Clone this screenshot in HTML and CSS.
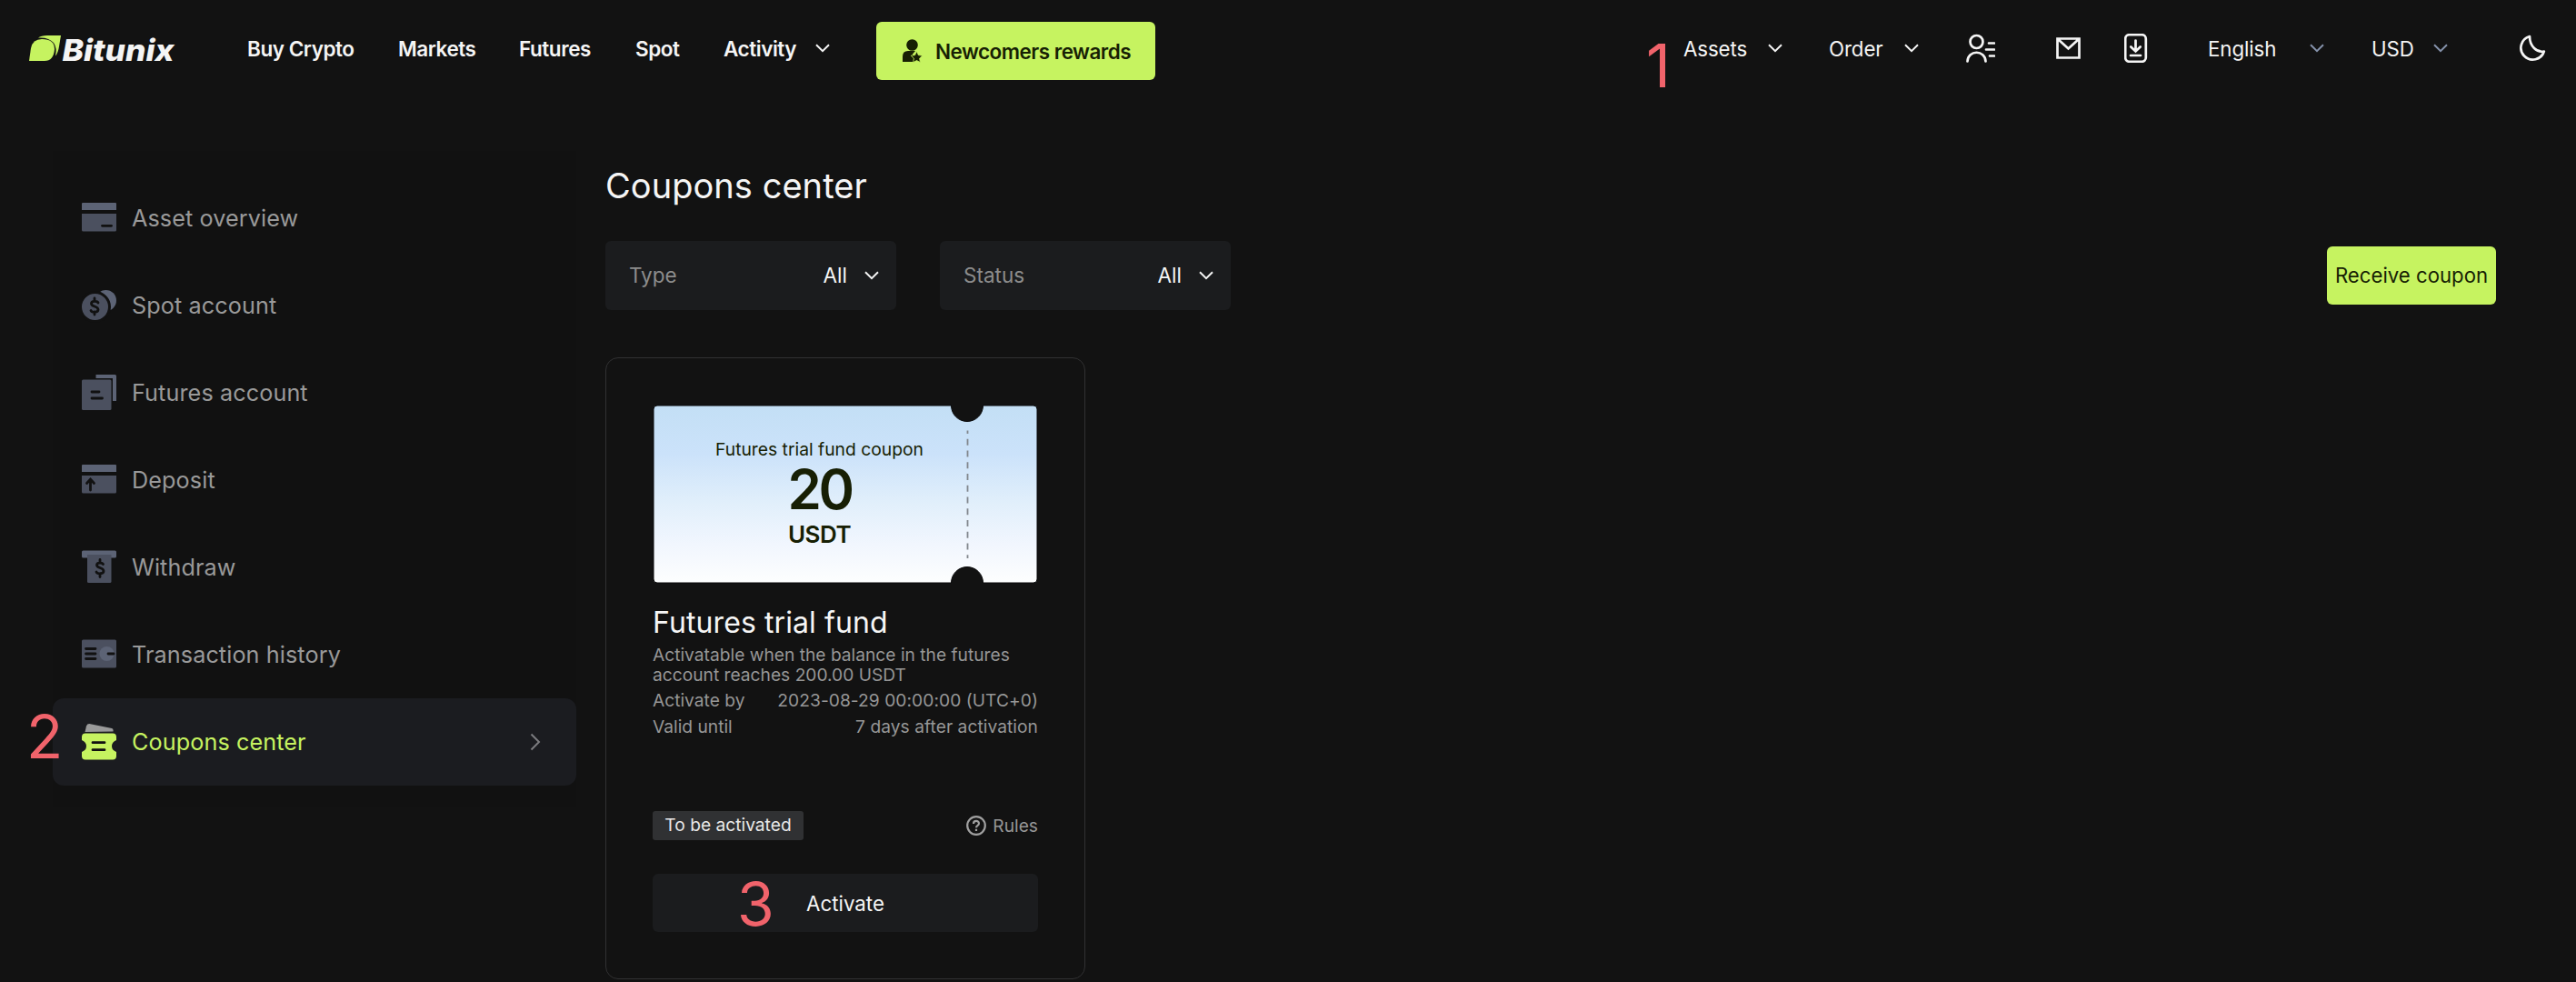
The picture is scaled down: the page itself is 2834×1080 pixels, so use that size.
FILE: index.html
```html
<!DOCTYPE html>
<html lang="en">
<head>
<meta charset="utf-8">
<title>Coupons center - Bitunix</title>
<link rel="stylesheet" href="styles.css">
</head>
<body>
<svg width="0" height="0" class="defs">
  <symbol id="chev" viewBox="0 0 16 10"><path d="M1 1.3 8 8.2 15 1.3" fill="none" stroke="currentColor" stroke-width="2"/></symbol>
</svg>
<header class="header">
  <a class="logo">
    <svg width="180" height="48" viewBox="0 -10 180 48">
      <path class="lime" d="M0 28 2 14Q4 4 14 4Q28 4 28 15Q27 28 17 28Z"/>
      <path class="lime" d="M10 2.6Q13 0 20 0H35L33 12Q32 19 29 22.5Q31 14 27 8Q21 1.500 10 2.600Z"/>
      <text class="wordmark" x="36.500" y="28" textLength="123" lengthAdjust="spacingAndGlyphs">Bitunix</text>
    </svg>
  </a>
  <nav class="nav-left">
    <a>Buy Crypto</a><a>Markets</a><a>Futures</a><a>Spot</a><a>Activity</a>
    <svg class="chev"><use href="#chev"/></svg>
    <a class="rewards">
      <svg width="22" height="26" viewBox="0 0 22 26"><circle cx="10.500" cy="6.500" r="6.300" fill="currentColor"/><path fill="currentColor" d="M0 25V19Q0 13 6 13H14L11 16.500V20L12 21V25Z"/><path fill="currentColor" stroke="#c6f360" stroke-width=".8" d="m15.500 13.600 1.900 4 4.400.6-3.200 3 .8 4.400-3.900-2.100-3.900 2.100.8-4.400-3.200-3 4.400-.6Z"/></svg>
      <span>Newcomers rewards</span>
    </a>
  </nav>
  <nav class="nav-right">
    <a>Assets</a><svg class="chev"><use href="#chev"/></svg>
    <a>Order</a><svg class="chev"><use href="#chev"/></svg>
    <svg width="32" height="32" viewBox="0 0 32 32" class="line"><circle cx="11.500" cy="9" r="7"/><path d="M1.500 30.500C2 17.500 21 17.500 21.500 30.500M25 10.500H31M22 17.500H31M26 24.500H31"/></svg>
    <svg width="28" height="24" viewBox="0 0 28 24" class="line"><path d="M1.500 1.500H25.500V22.500H1.500ZM2 2 13.500 12.500 25 2"/></svg>
    <svg width="26" height="32" viewBox="0 0 26 32" class="line"><rect x="1.200" y="1.200" width="22.600" height="29.600" rx="4.500"/><path d="M12.500 7.500V19M7.300 14.500 12.500 19.500 17.700 14.500M7 24H18"/></svg>
    <a>English</a><svg class="chev muted"><use href="#chev"/></svg>
    <a>USD</a><svg class="chev muted"><use href="#chev"/></svg>
    <svg width="30" height="30" viewBox="0 0 30 30" class="line"><path stroke-linejoin="round" d="M11 2A13 13 0 1 0 26.800 18.500C19 20 11 13 11 2Z"/></svg>
  </nav>
  <span class="mark mark-1">1</span>
</header>

<div class="page">
  <aside class="sidebar">
    <a class="item"><svg class="ico" viewBox="0 0 38 40"><path class="a" d="M0 4Q0 3 1 3H37Q38 3 38 4V11H0Z"/><path class="b" d="M0 15H38V33Q38 34.500 36.500 34.500H1.500Q0 34.500 0 33Z"/><path class="cut" d="M22.500 28.300H32.500"/></svg><span>Asset overview</span></a>
    <a class="item"><svg class="ico" viewBox="0 0 38 40"><circle class="a" cx="26.500" cy="14.500" r="11.500"/><circle class="b edge" cx="14.500" cy="21.500" r="16"/><path class="cut" d="M18 17C17 15 10.500 14.500 10.500 18C10.500 21.500 18 20.500 18 24.500C18 28 11 28 10 25.500M14 12V15M14 27V30"/></svg><span>Spot account</span></a>
    <a class="item"><svg class="ico" viewBox="0 0 38 40"><path class="a" d="M15.500 0H36.500Q38 0 38 1.500V29H34V4H15.500Z"/><rect class="b" y="5.500" width="32.500" height="33.500" rx="1.500"/><path class="cut" d="M11 19H19M11 26H22.500"/></svg><span>Futures account</span></a>
    <a class="item"><svg class="ico" viewBox="0 0 38 40"><path class="a" d="M0 4Q0 3 1 3H37Q38 3 38 4V11H0Z"/><path class="b" d="M0 15H38V33Q38 34.500 36.500 34.500H1.500Q0 34.500 0 33Z"/><path class="cut" d="M9.500 31V19.500M5.500 23.500 9.500 19 13.500 23.500"/></svg><span>Deposit</span></a>
    <a class="item"><svg class="ico" viewBox="0 0 38 40"><rect class="a" y="1.500" width="38" height="8" rx="1.500"/><path class="b" d="M6 6H32.500V35.500Q32.500 37 31 37H7.500Q6 37 6 35.500Z"/><path class="cut" d="M23.500 16.500C22.500 14.500 16.500 14.500 16.500 17.500C16.500 21 24 20 24 24C24 27.500 17 27.500 16 25M20 11.500V14.500M20 27V30.500"/></svg><span>Withdraw</span></a>
    <a class="item"><svg class="ico" viewBox="0 0 38 40"><rect class="b" y="3.500" width="38" height="31" rx="1.500"/><circle class="a" cx="27.500" cy="19" r="8"/><path class="cut" d="M4.500 13.500H15M4.500 19H15M4.500 24.500H15M29 19H35"/></svg><span>Transaction history</span></a>
    <a class="item active"><svg class="ico" viewBox="0 0 38 40"><path fill="#9a9a9a" d="M3.500 9 5 2.500Q6-.5 9.500.2L33 5Q35 5.500 34.500 8.500Z"/><path class="lime" d="M4 10.500H34Q38 10.500 38 14.500V18Q33 20 33 24.500T38 31V35.500Q38 39.500 34 39.500H4Q0 39.500 0 35.500V31Q5 29 5 24.500T0 18V14.500Q0 10.500 4 10.500Z"/><path class="cut" d="M12 20.700H25M12 28.700H25"/></svg><span>Coupons center</span>
      <svg class="next" width="12" height="20" viewBox="0 0 12 20"><path d="M1.500 1.500 10 10 1.500 18.500" fill="none" stroke="#7c7c7f" stroke-width="2"/></svg></a>
    <span class="mark mark-2">2</span>
  </aside>

  <main class="main">
    <h1>Coupons center</h1>
    <div class="toolbar">
      <div class="select"><label>Type</label><span>All</span><svg class="chev"><use href="#chev"/></svg></div>
      <div class="select"><label>Status</label><span>All</span><svg class="chev"><use href="#chev"/></svg></div>
      <button class="receive">Receive coupon</button>
    </div>
    <article class="card">
      <div class="ticket">
        <svg class="ticket-bg" width="424" height="197" viewBox="0 0 424 197">
          <defs><linearGradient id="sky" x2="0" y2="1"><stop offset="0" stop-color="#c3dff5"/><stop offset=".27" stop-color="#cbe2fa"/><stop offset=".55" stop-color="#e1effb"/><stop offset=".78" stop-color="#f1f6fe"/><stop offset="1" stop-color="#fdfefe"/></linearGradient></defs>
          <path fill="url(#sky)" stroke="#08090a" d="M5 1H328.500A17.500 17.500 0 0 0 363.500 1H419A4 4 0 0 1 423 5V192A4 4 0 0 1 419 196H363.500A17.500 17.500 0 0 0 328.500 196H5A4 4 0 0 1 1 192V5A4 4 0 0 1 5 1Z"/>
          <path d="M346.500 28.500V169" stroke="#82878d" stroke-width="1.800" stroke-dasharray="7 5.750" stroke-dashoffset="3.500"/>
        </svg>
        <div class="ticket-text"><p class="kind">Futures trial fund coupon</p><p class="amount">20</p><p class="unit">USDT</p></div>
      </div>
      <h2>Futures trial fund</h2>
      <p class="desc">Activatable when the balance in the futures account reaches 200.00 USDT</p>
      <dl>
        <div class="row"><dt>Activate by</dt><dd>2023-08-29 00:00:00 (UTC+0)</dd></div>
        <div class="row"><dt>Valid until</dt><dd>7 days after activation</dd></div>
      </dl>
      <div class="foot">
        <span class="tag">To be activated</span>
        <a class="rules"><svg width="22" height="22" viewBox="0 0 22 22"><circle cx="11" cy="11" r="9.800"/><path d="M8 9C8 5 14 5 14 8.700C14 11 11 10.700 11 13.200M11 14.800V17"/></svg>Rules</a>
      </div>
      <button class="activate">Activate</button>
      <span class="mark mark-3">3</span>
    </article>
  </main>
</div>
</body>
</html>
```
FILE: styles.css
```css
* { box-sizing: border-box; }
body {
  margin: 0;
  width: 2834px;
  height: 1080px;
  overflow: hidden;
  background: #121212;
  color: #f5f5f5;
  font-family: Inter, "Liberation Sans", sans-serif;
}
h1, h2, p, dl, dd { margin: 0; font-weight: 400; }
button { border: 0; padding: 0; font-family: inherit; }
svg { display: block; flex: none; }
.defs { position: absolute; }
.lime { fill: #c6f360; }
.chev { width: 16px; height: 10px; }
.muted { color: #8592ab; }

/* Header */
.header { position: relative; display: flex; align-items: center; height: 106px; padding-left: 32px; }
.logo { width: 240px; height: 48px; }
.wordmark { font-size: 33px; font-weight: 800; font-style: italic; fill: #f5f5f5; }
.nav-left {
  display: grid;
  grid-template-columns: 166px 133px 128px 97px 101px 67px 307px;
  align-items: center;
  width: 1580px;
  font-size: 22.5px;
  font-weight: 600;
  letter-spacing: -0.45px;
}
.rewards {
  display: flex;
  align-items: center;
  gap: 14px;
  height: 64px;
  margin-top: 6px;
  padding-left: 29px;
  border-radius: 6px;
  background: #c6f360;
  color: #171f04;
  letter-spacing: -0.52px;
}
.nav-right {
  display: grid;
  grid-template-columns: 93px 67px 83px 68px 99px 75px 92px 112px 68px 68px 95px 30px;
  align-items: center;
  font-size: 22.3px;
  letter-spacing: -0.1px;
}
.line { fill: none; stroke: #f5f5f5; stroke-width: 2.7; stroke-linecap: round; }

/* Page */
.page { display: flex; gap: 32px; padding: 60px 88px 0 58px; }
.sidebar { position: relative; width: 576px; height: 722px; padding-top: 26px; background: #111; }
.item {
  display: flex;
  align-items: center;
  gap: 17px;
  height: 96px;
  padding: 0 39px 0 32px;
  font-size: 25.2px;
  letter-spacing: 0.1px;
  color: #999;
}
.ico { width: 38px; height: 40px; }
.a { fill: #5c6375; }
.b { fill: #4b505f; }
.edge { stroke: #111; stroke-width: 3; }
.cut { fill: none; stroke: #111; stroke-width: 2.8; stroke-linecap: round; }
.active { border-radius: 12px; background: #1b1c20; color: #c6f360; }
.next { margin-left: auto; }

.main { flex: 1; padding-top: 15px; }
h1 { font-size: 38px; line-height: 46px; letter-spacing: 0.05px; }
.toolbar { display: flex; gap: 48px; height: 76px; margin-top: 38px; }
.select {
  display: flex;
  align-items: center;
  width: 320px;
  padding: 0 19px 0 26px;
  border-radius: 6px;
  background: #1b1c1e;
  font-size: 22.5px;
}
.select label { flex: 1; color: #8c8c8c; }
.select label, .select span { padding-bottom: 2px; }
.select .chev { margin-left: 19px; }
.receive {
  align-self: center;
  width: 186px;
  height: 64px;
  margin-left: auto;
  padding-bottom: 2px;
  border-radius: 6px;
  background: #c6f360;
  color: #171f04;
  font-size: 22.2px;
}

/* Coupon card */
.card {
  position: relative;
  width: 528px;
  height: 684px;
  margin-top: 52px;
  padding: 51px;
  border: 1px solid #313132;
  border-radius: 14px;
}
.ticket { position: relative; height: 197px; }
.ticket-bg { position: absolute; inset: 0; }
.ticket-text {
  position: relative;
  width: 367px;
  padding-top: 37px;
  text-align: center;
  color: #171f04;
}
.kind { font-size: 19.3px; line-height: 24px; }
.amount { font-size: 60px; font-weight: 600; line-height: 64px; letter-spacing: -3.5px; }
.unit { margin-top: 2px; font-size: 26px; font-weight: 600; line-height: 32px; letter-spacing: -0.5px; }
h2 { margin-top: 23px; font-size: 32px; line-height: 40px; letter-spacing: 0.1px; }
.desc { margin-top: 4px; font-size: 19.2px; line-height: 22px; color: #969696; }
dl { margin-top: 3px; font-size: 19.2px; line-height: 29px; color: #969696; }
dd { letter-spacing: 0.05px; }
.row { display: flex; justify-content: space-between; }
.foot { display: flex; justify-content: space-between; align-items: center; height: 32px; margin-top: 78px; font-size: 19.2px; }
.tag { width: 166px; height: 32px; border-radius: 3px; background: #303133; line-height: 31px; text-align: center; color: #e8e8e8; }
.rules { display: flex; align-items: center; gap: 7px; color: #969696; }
.rules svg { fill: none; stroke: #a0a0a0; stroke-width: 2.2; }
.activate {
  display: block;
  width: 424px;
  height: 64px;
  margin-top: 37px;
  border-radius: 6px;
  background: #1b1c1e;
  color: #f5f5f5;
  font-size: 22.3px;
}

/* Numbered step marks laid over the page */
.mark { position: absolute; font-size: 66px; line-height: 66px; font-weight: 400; color: #f1636b; }
.mark-1 { left: 1811px; top: 39px; }
.mark-2 { left: -29px; top: 611px; }
.mark-3 { left: 144px; top: 567px; }
```
